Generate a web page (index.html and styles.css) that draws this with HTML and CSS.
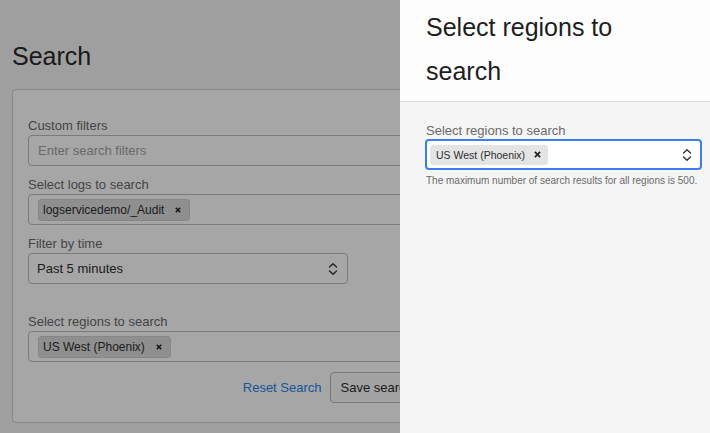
FILE: index.html
```html
<!DOCTYPE html>
<html lang="en">
<head>
<meta charset="utf-8">
<title>Search</title>
<link rel="stylesheet" href="styles.css">
</head>
<body>
<main class="page">
  <h1 class="page-title">Search</h1>
  <form class="card">
    <div class="field">
      <label class="label">Custom filters</label>
      <div class="input"><span class="placeholder">Enter search filters</span></div>
    </div>
    <div class="field">
      <label class="label">Select logs to search</label>
      <div class="input">
        <span class="chip">logservicedemo/_Audit <svg class="chip-x" viewBox="0 0 8 8" width="6" height="6"><path d="M1 1L7 7M7 1L1 7"/></svg></span>
      </div>
    </div>
    <div class="field">
      <label class="label">Filter by time</label>
      <div class="input select">
        <span class="value">Past 5 minutes</span>
        <svg class="chev" viewBox="0 0 10 14" width="10" height="14"><path d="M1.5 5L5 1.8L8.5 5M1.5 9L5 12.2L8.5 9"/></svg>
      </div>
    </div>
    <div class="field field-gap">
      <label class="label">Select regions to search</label>
      <div class="input">
        <span class="chip">US West (Phoenix) <svg class="chip-x" viewBox="0 0 8 8" width="6" height="6"><path d="M1 1L7 7M7 1L1 7"/></svg></span>
      </div>
    </div>
    <div class="actions">
      <a class="link">Reset Search</a>
      <button type="button" class="btn">Save search</button>
      <button type="button" class="btn btn-primary">Search</button>
    </div>
  </form>
</main>

<div class="overlay"></div>

<aside class="drawer">
  <header class="drawer-head">
    <h2 class="drawer-title">Select regions to search</h2>
  </header>
  <div class="drawer-body">
    <label class="label">Select regions to search</label>
    <div class="input input-focus">
      <span class="chip chip-light">US West (Phoenix) <svg class="chip-x" viewBox="0 0 8 8" width="7" height="7"><path d="M1 1L7 7M7 1L1 7"/></svg></span>
      <svg class="chev" viewBox="0 0 10 14" width="10" height="14"><path d="M1.5 5L5 1.8L8.5 5M1.5 9L5 12.2L8.5 9"/></svg>
    </div>
    <p class="help">The maximum number of search results for all regions is 500.</p>
  </div>
</aside>
</body>
</html>
```

FILE: styles.css
```css
* { box-sizing: border-box; }

html, body {
  margin: 0;
  height: 100%;
}

body {
  background: #f4f4f4;
  font-family: "Liberation Sans", Arial, sans-serif;
  color: #2e2e2e;
  overflow: hidden;
}

.page {
  padding: 42px 12px 0 12px;
}

.page-title {
  margin: 0;
  font-size: 25px;
  line-height: 29px;
  font-weight: 400;
  color: #2a2a2a;
}

.card {
  margin-top: 18px;
  width: 499px;
  background: #ffffff;
  border: 1px solid #cfcfcf;
  border-radius: 4px;
  padding: 27px 15px 19px 15px;
}

.field {
  margin-bottom: 10px;
}

.field-gap {
  margin-top: 29px;
}

.label {
  display: block;
  font-size: 13px;
  line-height: 17px;
  color: #6a6a6a;
  margin-bottom: 1px;
}

.input {
  height: 31px;
  background: #fff;
  border: 1px solid #bdbdbd;
  border-radius: 4px;
  display: flex;
  align-items: center;
  padding: 0 9px;
  font-size: 13px;
  color: #2e2e2e;
}

.placeholder {
  color: #a3a3a3;
}

.select {
  width: 320px;
  justify-content: space-between;
  padding-left: 8px;
}

.chip {
  display: inline-flex;
  align-items: center;
  height: 22px;
  padding: 0 8px 0 4px;
  background: #dcdcdc;
  border: 1px solid #d0d0d0;
  border-radius: 3px;
  font-size: 12px;
  color: #2e2e2e;
  gap: 11px;
}

.chip-x {
  stroke: #222;
  stroke-width: 2;
  fill: none;
}

.chev {
  stroke: #333;
  stroke-width: 1.4;
  fill: none;
  stroke-linecap: round;
  stroke-linejoin: round;
}

.actions {
  display: flex;
  align-items: center;
  justify-content: flex-end;
  gap: 8px;
  margin-top: 9px;
}

.link {
  color: #2584ea;
  font-size: 13px;
  text-decoration: none;
}

.btn {
  height: 31px;
  padding: 0 10px;
  font-family: "Liberation Sans", Arial, sans-serif;
  font-size: 13px;
  color: #2e2e2e;
  background: #fbfbfb;
  border: 1px solid #b8b8b8;
  border-radius: 4px;
}

.btn-primary {
  background: #2f6fb0;
  border-color: #2f6fb0;
  color: #fff;
}

.overlay {
  position: fixed;
  inset: 0;
  background: rgba(0, 0, 0, 0.35);
}

.drawer {
  position: fixed;
  top: 0;
  right: 0;
  bottom: 0;
  width: 310px;
  background: #f5f5f5;
  display: flex;
  flex-direction: column;
}

.drawer-head {
  background: #fdfdfd;
  border-bottom: 1px solid #dedede;
  padding: 5px 56px 8px 26px;
}

.drawer-title {
  margin: 0;
  font-size: 25px;
  line-height: 44px;
  font-weight: 400;
  color: #1e1e1e;
}

.drawer-body {
  padding: 20px 8px 0 25px;
}

.drawer-body .label {
  margin-bottom: 0;
  padding-left: 1px;
}

.input-focus {
  border: 2px solid #3a7ff0;
  padding: 0 8px 0 3px;
  justify-content: space-between;
}

.chip-light {
  height: 20px;
  background: #e4e4e4;
  border-color: #e4e4e4;
  font-size: 10.5px;
  padding: 0 6px 0 5px;
  gap: 9px;
}

.help {
  margin: 4px 0 0 1px;
  font-size: 10px;
  line-height: 13px;
  color: #6a6a6a;
}
```
